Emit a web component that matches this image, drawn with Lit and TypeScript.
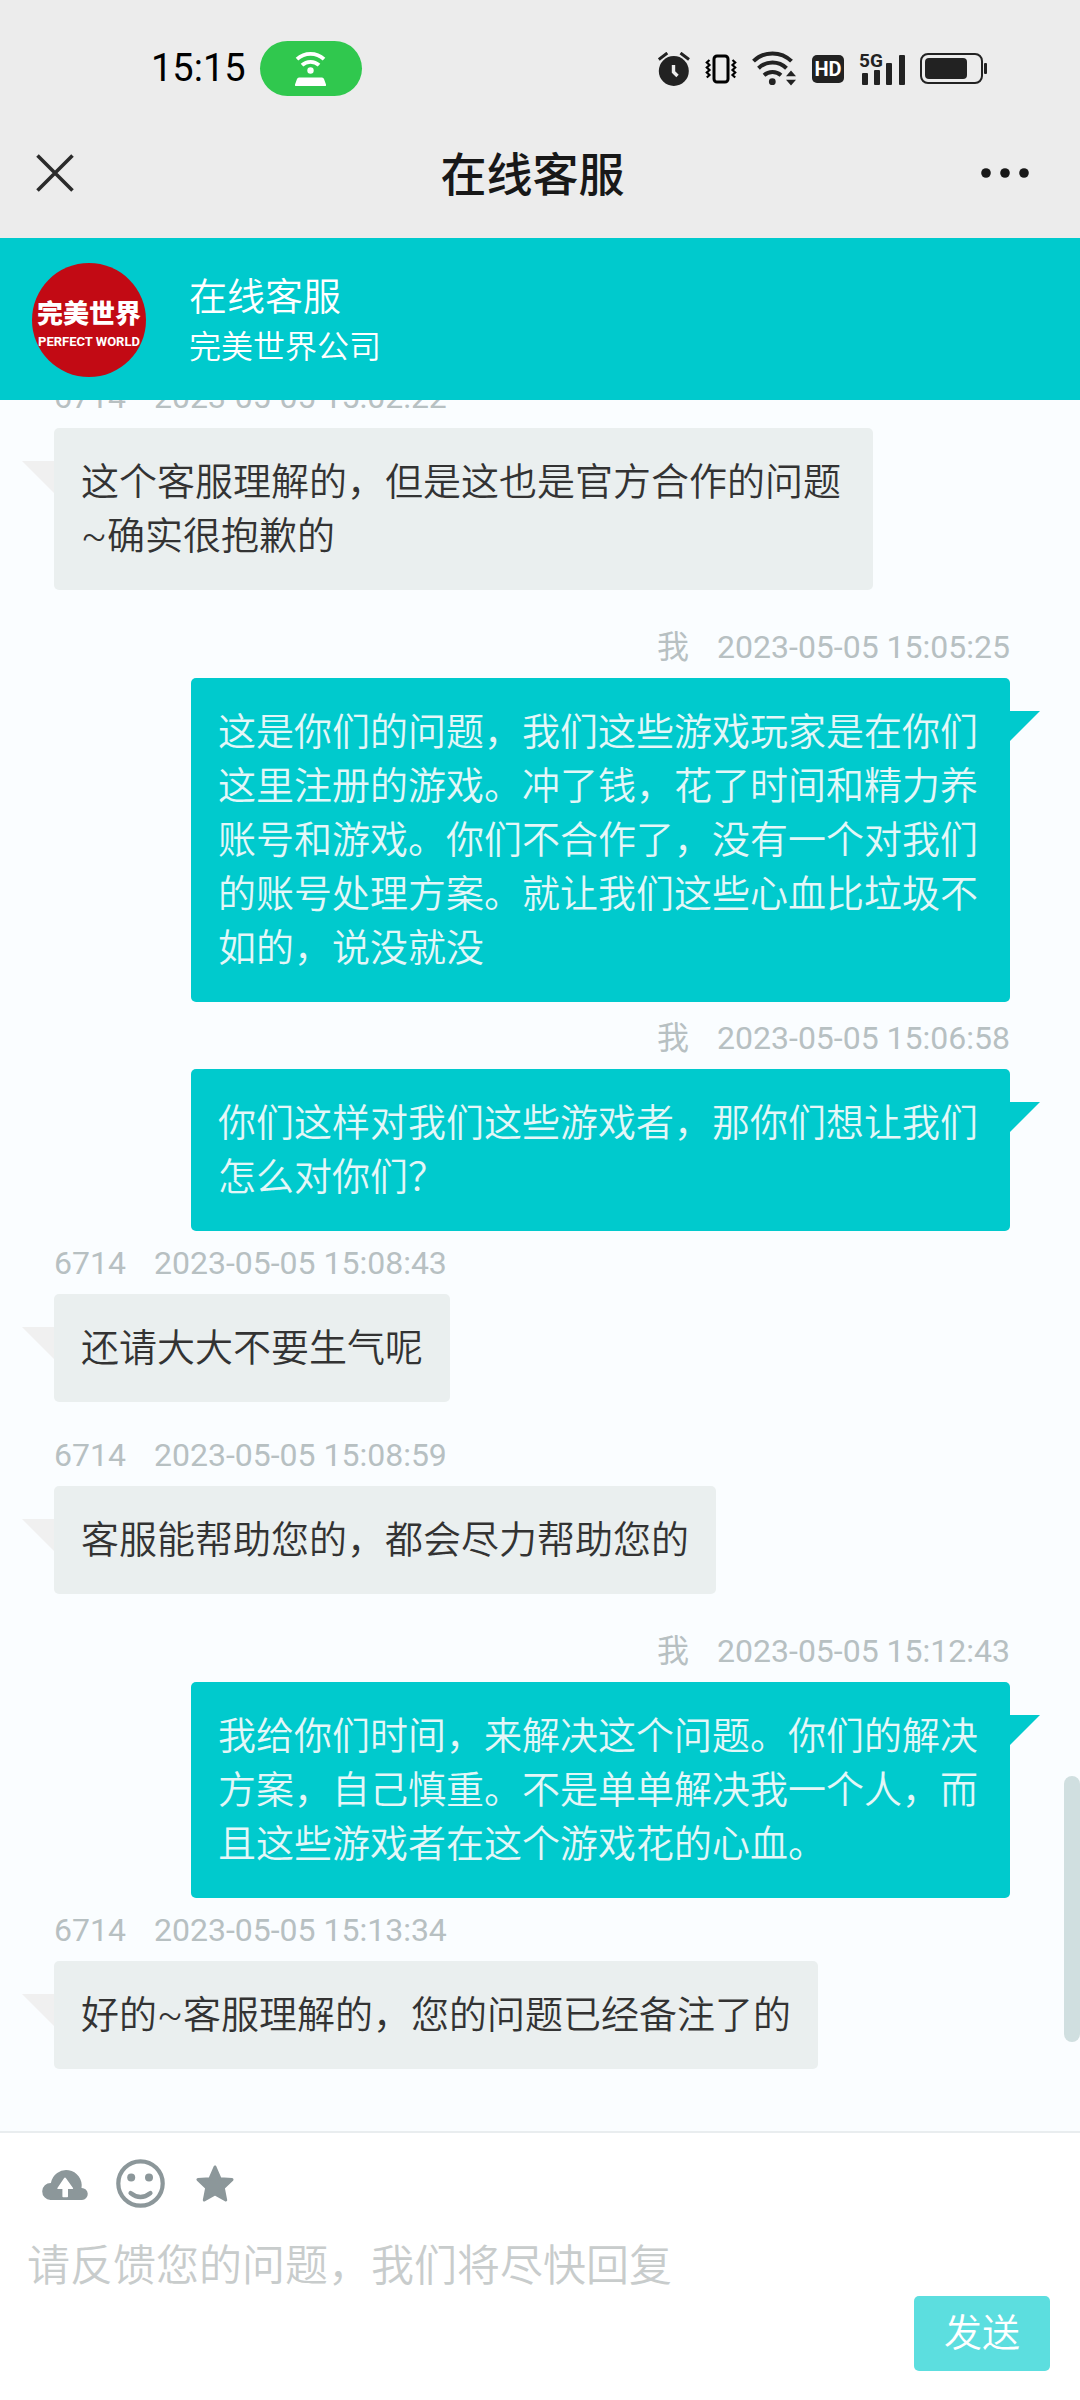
import { LitElement, html, css } from "lit"
import { customElement, property } from "lit/decorators.js"
import { classMap } from "lit/directives/class-map.js"


interface Message {
   author: string
   time: string
   text: string
   own?: boolean
}

const MESSAGES: Message[] = [
   { author: "6714", time: "2023-05-05 15:02:22", text: "这个客服理解的，但是这也是官方合作的问题~确实很抱歉的" },
   { author: "我", time: "2023-05-05 15:05:25", own: true, text: "这是你们的问题，我们这些游戏玩家是在你们这里注册的游戏。冲了钱，花了时间和精力养账号和游戏。你们不合作了，没有一个对我们的账号处理方案。就让我们这些心血比垃圾不如的，说没就没" },
   { author: "我", time: "2023-05-05 15:06:58", own: true, text: "你们这样对我们这些游戏者，那你们想让我们怎么对你们？" },
   { author: "6714", time: "2023-05-05 15:08:43", text: "还请大大不要生气呢" },
   { author: "6714", time: "2023-05-05 15:08:59", text: "客服能帮助您的，都会尽力帮助您的" },
   { author: "我", time: "2023-05-05 15:12:43", own: true, text: "我给你们时间，来解决这个问题。你们的解决方案，自己慎重。不是单单解决我一个人，而且这些游戏者在这个游戏花的心血。" },
   { author: "6714", time: "2023-05-05 15:13:34", text: "好的~客服理解的，您的问题已经备注了的" },
]


@customElement('status-bar')
export class StatusBar extends LitElement {
   render() {
      return html`
         <time class="clock">15:15</time>
         <span class="hotspot">
            <svg width="31" height="34" viewBox="0 0 31 34" fill="none" stroke="#fff" stroke-width="3.8">
               <path d="M2 7.2A20 20 0 0 1 29 7.2"/>
               <path d="M7 13.2A12.5 12.5 0 0 1 24 13.2"/>
               <circle cx="15.5" cy="18.5" r="3.2" fill="#fff" stroke="none"/>
               <path d="M4 25.5h23q1.5 0 2 1.5l2 5.5q.3 1.5-1 1.5H1q-1.3 0-1-1.5L2 27q.5-1.5 2-1.5z" fill="#fff" stroke="none"/>
            </svg>
         </span>
         <span class="icons">
            <svg width="32" height="34" viewBox="0 0 32 34" fill="none">
               <circle cx="15.8" cy="19" r="15" fill="#222"/>
               <path d="M.8 7.5 9.3 1M22.5 1l8.5 6.5" stroke="#222" stroke-width="3"/>
               <path d="M15.5 13v7l4 4" stroke="#ececec" stroke-width="3.4"/>
            </svg>
            <svg width="32" height="30" viewBox="0 0 32 30" fill="none" stroke="#000" stroke-width="3">
               <rect x="9" y="2" width="14" height="26" rx="3"/>
               <path stroke-width="2.2" d="M4.5 6 1.8 8.5 4.5 11 1.8 13.5 4.5 16 1.8 18.5 4.5 21 1.8 23.5M27.5 6l2.7 2.5-2.7 2.5 2.7 2.5-2.7 2.5 2.7 2.5-2.7 2.5 2.7 2.5"/>
            </svg>
            <svg width="45" height="35" viewBox="0 0 45 35" fill="none" stroke="#222" stroke-width="4">
               <path d="M1.5 10.2A27 27 0 0 1 39.5 10.2"/>
               <path d="M6.5 17.2A20 20 0 0 1 34.5 17.2"/>
               <path d="M12 24.2A13 13 0 0 1 29 24.2"/>
               <circle cx="20.3" cy="30.7" r="3.4" fill="#222" stroke="none"/>
               <path d="M39 19.5l5 5.8H34zM39 34.5l5-5.8H34z" fill="#222" stroke="none"/>
            </svg>
            <span class="hd">HD</span>
            <svg width="46" height="34" viewBox="0 0 46 34" fill="#222">
               <text class="network" x="0" y="15">5G</text>
               <rect x="3" y="21" width="6" height="12" rx="1"/>
               <rect x="15" y="18" width="6" height="15" rx="1"/>
               <rect x="27" y="11" width="6" height="22" rx="1"/>
               <rect x="40" y="3" width="6" height="30" rx="1"/>
            </svg>
            <svg width="67" height="31" viewBox="0 0 67 31" fill="#222">
               <rect x="1" y="1" width="61" height="29" rx="7" fill="none" stroke="#222" stroke-width="2"/>
               <rect x="5" y="5" width="42" height="21" rx="4"/>
               <rect x="64" y="10" width="3" height="11" rx="1"/>
            </svg>
         </span>
      `
   }

   static styles = css`
      :host {
         display: flex;
         align-items: center;
         padding: 41px 93px 12px 151px;
      }
      .clock {
         font: 400 38px/55px Roboto, sans-serif;
         color: #000;
      }
      .hotspot {
         display: flex;
         align-items: center;
         justify-content: center;
         width: 102px;
         height: 55px;
         margin-left: 14px;
         border-radius: 28px;
         background: #30c84e;
      }
      .icons {
         display: flex;
         align-items: center;
         gap: 15px;
         margin-left: auto;
      }
      .hd {
         width: 32px;
         border-radius: 5px;
         background: #222;
         color: #fff;
         font: 700 20px/28px Roboto, sans-serif;
         text-align: center;
      }
      .network {
         font: 700 19px Roboto, sans-serif;
      }
   `
}


@customElement('chat-message')
export class ChatMessage extends LitElement {
   @property({ attribute: false })
   message!: Message

   render() {
      const { author, time, text, own } = this.message
      return html`
         <article class=${classMap({ message: true, own: !!own })}>
            <header class="meta"><span>${author}</span><time>${time}</time></header>
            <p class="bubble">${text}</p>
         </article>
      `
   }

   static styles = css`
      :host {
         display: block;
      }
      .message {
         display: flex;
         flex-direction: column;
         align-items: flex-start;
         padding-bottom: 21px;
      }
      .meta {
         display: flex;
         gap: 28px;
         padding-top: 2px;
         font-size: 32px;
         line-height: 61px;
         color: #b7c0c2;
      }
      .bubble {
         position: relative;
         box-sizing: border-box;
         max-width: calc(100% - 137px);
         margin: 0;
         padding: 27px;
         border-radius: 5px;
         background: #eaefef;
         color: #333;
         font-size: 38px;
         font-weight: 350;
         line-height: 54px;
      }
      .bubble::before {
         content: "";
         position: absolute;
         top: 33px;
         right: 100%;
         width: 32px;
         height: 32px;
         background: #f0f0f0;
         clip-path: polygon(0 0, 100% 0, 100% 100%);
      }
      .own {
         align-items: flex-end;
         padding-bottom: 0;
      }
      .own .meta {
         padding-top: 6px;
      }
      .own .bubble {
         background: #00cacd;
         color: #e4f7f8;
      }
      .own .bubble::before {
         right: auto;
         left: 100%;
         width: 30px;
         height: 30px;
         background: #00cacd;
         clip-path: polygon(0 0, 100% 0, 0 100%);
      }
   `
}


@customElement('message-composer')
export class MessageComposer extends LitElement {
   render() {
      return html`
         <div class="tools">
            <button class="tool" aria-label="上传">
               <svg width="46" height="34" viewBox="0 0 46 34" fill="#8c979a">
                  <path d="M8.5 34a8.5 8.5 0 0 1 .4-17A15.5 15.5 0 1 1 39.5 22A6 6 0 0 1 40 34z"/>
                  <path d="M22 12.2q1-1.2 2 0l7 9.8q.5 1-.5 1H26v7.5q0 .8-.8.8h-4q-.8 0-.8-.8V23h-4.500q-1 0-.5-1z" fill="#fff"/>
               </svg>
            </button>
            <button class="tool" aria-label="表情">
               <svg width="49" height="49" viewBox="0 0 49 49" fill="none" stroke="#8c979a" stroke-width="4.2" stroke-linecap="round">
                  <circle cx="24.5" cy="24.5" r="22.2"/>
                  <path d="M14.5 34Q24.5 42 34.5 34"/>
                  <circle cx="15.2" cy="18.5" r="4" fill="#8c979a" stroke="none"/>
                  <circle cx="33" cy="18.5" r="4" fill="#8c979a" stroke="none"/>
               </svg>
            </button>
            <button class="tool" aria-label="评价">
               <svg width="38" height="37" viewBox="0 0 38 37" fill="#8c979a" stroke="#8c979a" stroke-width="3" stroke-linejoin="round">
                  <path d="M19 2l5 11.7 12 .9-8.7 8.2L29.7 35 19 29 8.300 35l2.400-12.200L2 14.600l12-.9z"/>
               </svg>
            </button>
         </div>
         <textarea class="input" rows="1" aria-label="消息" placeholder="请反馈您的问题，我们将尽快回复"></textarea>
         <button class="send">发送</button>
      `
   }

   static styles = css`
      :host {
         display: flex;
         flex-direction: column;
         padding-bottom: 29px;
         border-top: 2px solid #e9edef;
         background: #fff;
      }
      button {
         padding: 0;
         border: 0;
         background: none;
         font-family: inherit;
         cursor: pointer;
      }
      .tools {
         display: flex;
         gap: 25px;
         padding: 0 40px;
      }
      .tool {
         display: flex;
         align-items: center;
         justify-content: center;
         width: 50px;
         height: 100px;
      }
      .input {
         box-sizing: border-box;
         height: 63px;
         padding: 3px 27px 0;
         border: 0;
         outline: 0;
         resize: none;
         overflow: hidden;
         background: none;
         color: #333;
         font: inherit;
         font-size: 43px;
         font-weight: 350;
         line-height: 60px;
      }
      .input::placeholder {
         color: #c8cccc;
      }
      .send {
         align-self: flex-end;
         margin-right: 30px;
         padding: 0 30px;
         border-radius: 5px;
         background: #5cdedf;
         color: #fff;
         font-size: 38px;
         font-weight: 350;
         line-height: 75px;
      }
   `
}


@customElement('app-root')
export class AppRoot extends LitElement {
   render() {
      return html`
         <div class="top">
            <status-bar></status-bar>
            <nav class="nav">
               <button class="nav-btn" aria-label="关闭">
                  <svg width="38" height="38" viewBox="0 0 38 38" stroke="#2b2b2b" stroke-width="3.6">
                     <path d="M1.5 1.5l35 35M36.5 1.5l-35 35"/>
                  </svg>
               </button>
               <h1 class="title">在线客服</h1>
               <button class="nav-btn more" aria-label="更多">
                  <svg width="48" height="10" viewBox="0 0 48 10" fill="#181818">
                     <circle cx="5" cy="5" r="4.8"/><circle cx="24" cy="5" r="4.8"/><circle cx="43" cy="5" r="4.8"/>
                  </svg>
               </button>
            </nav>
         </div>
         <header class="company">
            <div class="avatar">
               <span class="brand">完美世界</span>
               <span class="brand-en">PERFECT WORLD</span>
            </div>
            <div>
               <div class="service">在线客服</div>
               <div class="name">完美世界公司</div>
            </div>
         </header>
         <main class="chat">
            <div class="list">
               ${MESSAGES.map(m => html`<chat-message .message=${m}></chat-message>`)}
            </div>
            <div class="scrollbar"></div>
         </main>
         <message-composer></message-composer>
      `
   }

   static styles = css`
      :host {
         display: flex;
         flex-direction: column;
         height: 100vh;
         background: #fafdff;
         font-family: Roboto, "Noto Sans CJK SC", sans-serif;
      }
      .top {
         background: #ececec;
      }
      .nav {
         display: grid;
         grid-template-columns: 1fr auto 1fr;
         align-items: center;
         height: 130px;
         padding: 0 51px 0 36px;
      }
      .nav-btn {
         display: flex;
         justify-self: start;
         padding: 0;
         border: 0;
         background: none;
         cursor: pointer;
      }
      .more {
         justify-self: end;
      }
      .title {
         margin: 0;
         padding-top: 4px;
         color: #181818;
         font-size: 46px;
         font-weight: 500;
         line-height: 64px;
      }
      .company {
         display: flex;
         align-items: center;
         gap: 43px;
         padding: 25px 32px 23px;
         background: #00cacd;
         color: #fff;
      }
      .avatar {
         display: flex;
         flex-direction: column;
         align-items: center;
         justify-content: center;
         width: 114px;
         height: 114px;
         border-radius: 50%;
         background: #c20a14;
         overflow: hidden;
         white-space: nowrap;
      }
      .brand {
         padding-top: 8px;
         font-size: 26px;
         font-weight: 900;
         line-height: 36px;
      }
      .brand-en {
         font-size: 13px;
         font-weight: 700;
         line-height: 20px;
      }
      .service {
         font-size: 38px;
         font-weight: 350;
         line-height: 54px;
      }
      .name {
         font-size: 32px;
         font-weight: 350;
         line-height: 46px;
      }
      .chat {
         position: relative;
         flex: 1;
         min-height: 0;
      }
      /* anchored to the bottom, older messages slide under the header */
      .list {
         display: flex;
         flex-direction: column;
         justify-content: flex-end;
         box-sizing: border-box;
         height: 100%;
         padding: 0 70px 41px 54px;
         overflow: hidden;
      }
      .scrollbar {
         position: absolute;
         right: 0;
         bottom: 89px;
         width: 16px;
         height: 266px;
         border-radius: 8px;
         background: #d0dfe0;
      }
   `
}


declare global {
   interface HTMLElementTagNameMap {
      'app-root': AppRoot
      'status-bar': StatusBar
      'chat-message': ChatMessage
      'message-composer': MessageComposer
   }
}
